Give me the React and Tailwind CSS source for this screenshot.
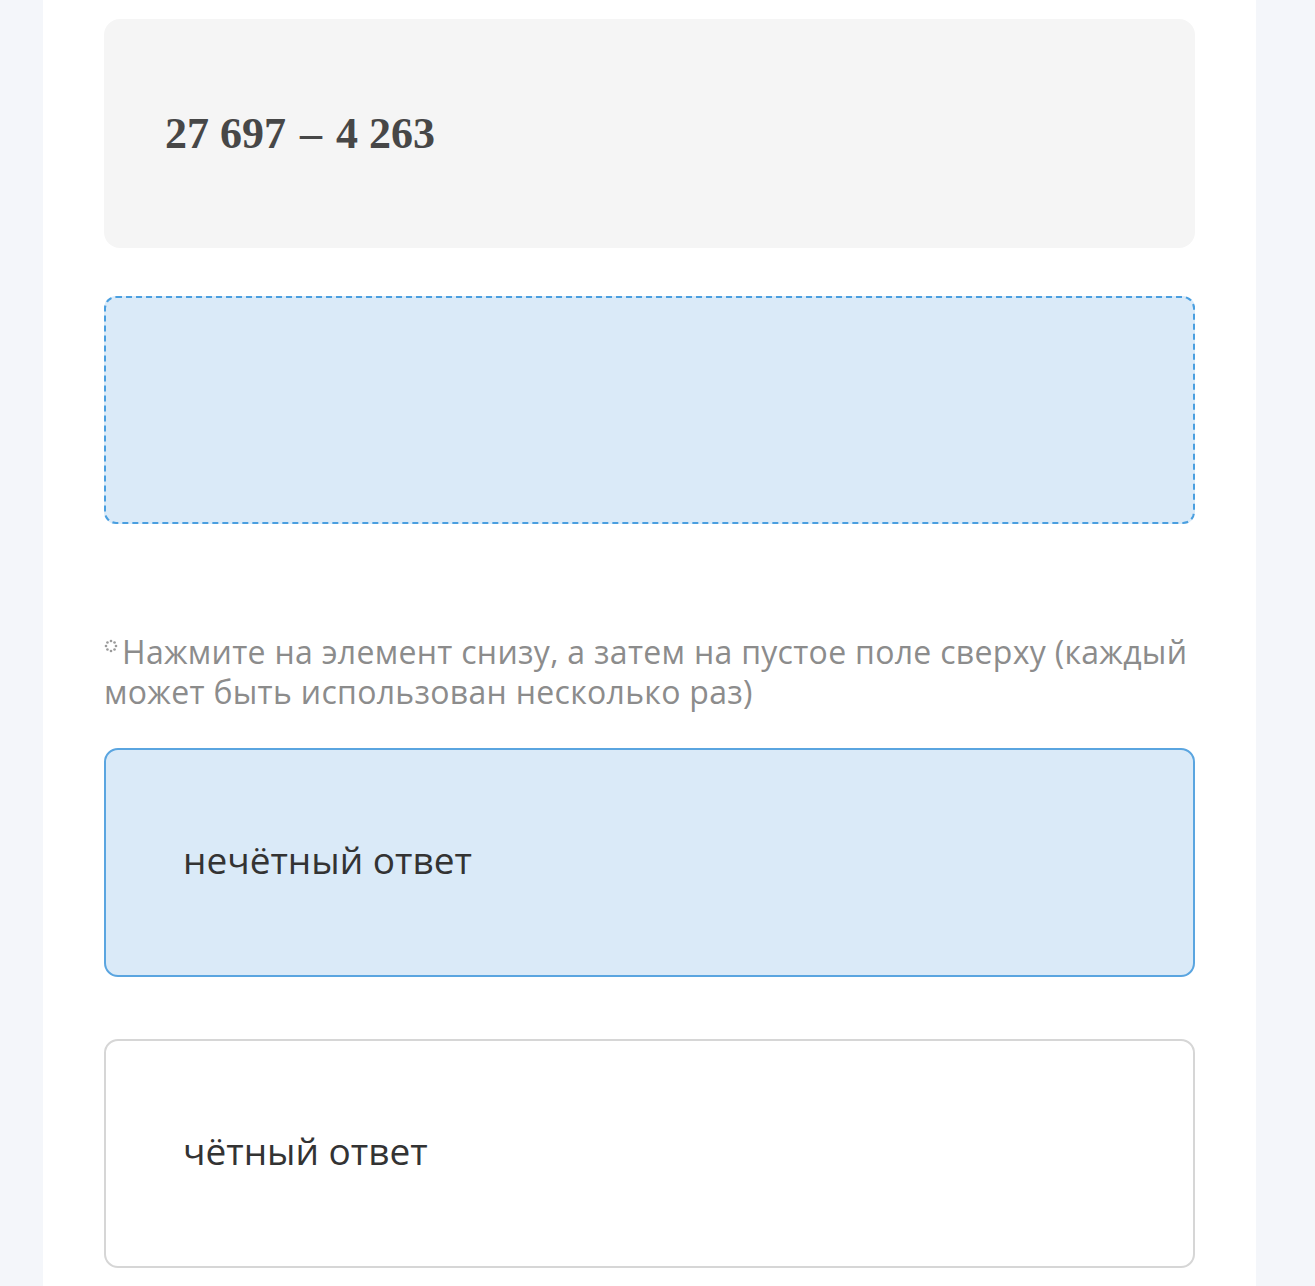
import React from 'react'

// little dotted ring shown before the hint
function DotsIcon() {
    const dots = []
    for (let i = 0; i < 8; i++) {
        const a = (i / 8) * Math.PI * 2
        dots.push(<circle key={i} cx={7 + Math.cos(a) * 5} cy={7 + Math.sin(a) * 5} r="1.3" fill="#9a9a9a" />)
    }
    return (
        <svg width="14" height="14" viewBox="0 0 14 14" className="inline-block align-top mt-[7px] mr-[4px]">
            {dots}
        </svg>
    )
}

function Choice({ label, active }) {
    return (
        <div
            className={
                active
                    ? 'h-[229px] rounded-[14px] border-2 border-[#5aa5e0] bg-[#daeaf8] flex items-center pl-[77px] pb-[6px]'
                    : 'h-[229px] rounded-[14px] border-2 border-[#d6d6d6] bg-white flex items-center pl-[77px] pb-[6px]'
            }
        >
            <span className="text-[37px] text-[#333333] font-['Open_Sans',sans-serif]">{label}</span>
        </div>
    )
}

export default function App() {
    return (
        <div className="min-h-[1286px] bg-[#f4f6fa] flex justify-center">
            <div className="w-[1213px] bg-white px-[61px] pt-[19px] pb-[20px] -ml-[16px]">
                <div className="h-[229px] rounded-[16px] bg-[#f5f5f5] flex items-center pl-[61px]">
                    <span className="text-[44px] font-bold text-[#474747] font-['Liberation_Serif',serif]">
                        27 697<span className="mx-[14px]">–</span>4 263
                    </span>
                </div>

                <div className="mt-[48px] h-[228px] rounded-[12px] border-2 border-dashed border-[#4a9fe0] bg-[#daeaf8]" />

                <p className="mt-[108px] text-[32px] tracking-[0.3px] leading-[40px] text-[#8c8c8c] font-['Open_Sans',sans-serif]">
                    <DotsIcon />
                    Нажмите на элемент снизу, а затем на пустое поле сверху (каждый может быть использован несколько раз)
                </p>

                <div className="mt-[36px]">
                    <Choice label="нечётный ответ" active />
                </div>
                <div className="mt-[62px]">
                    <Choice label="чётный ответ" />
                </div>
            </div>
        </div>
    )
}
